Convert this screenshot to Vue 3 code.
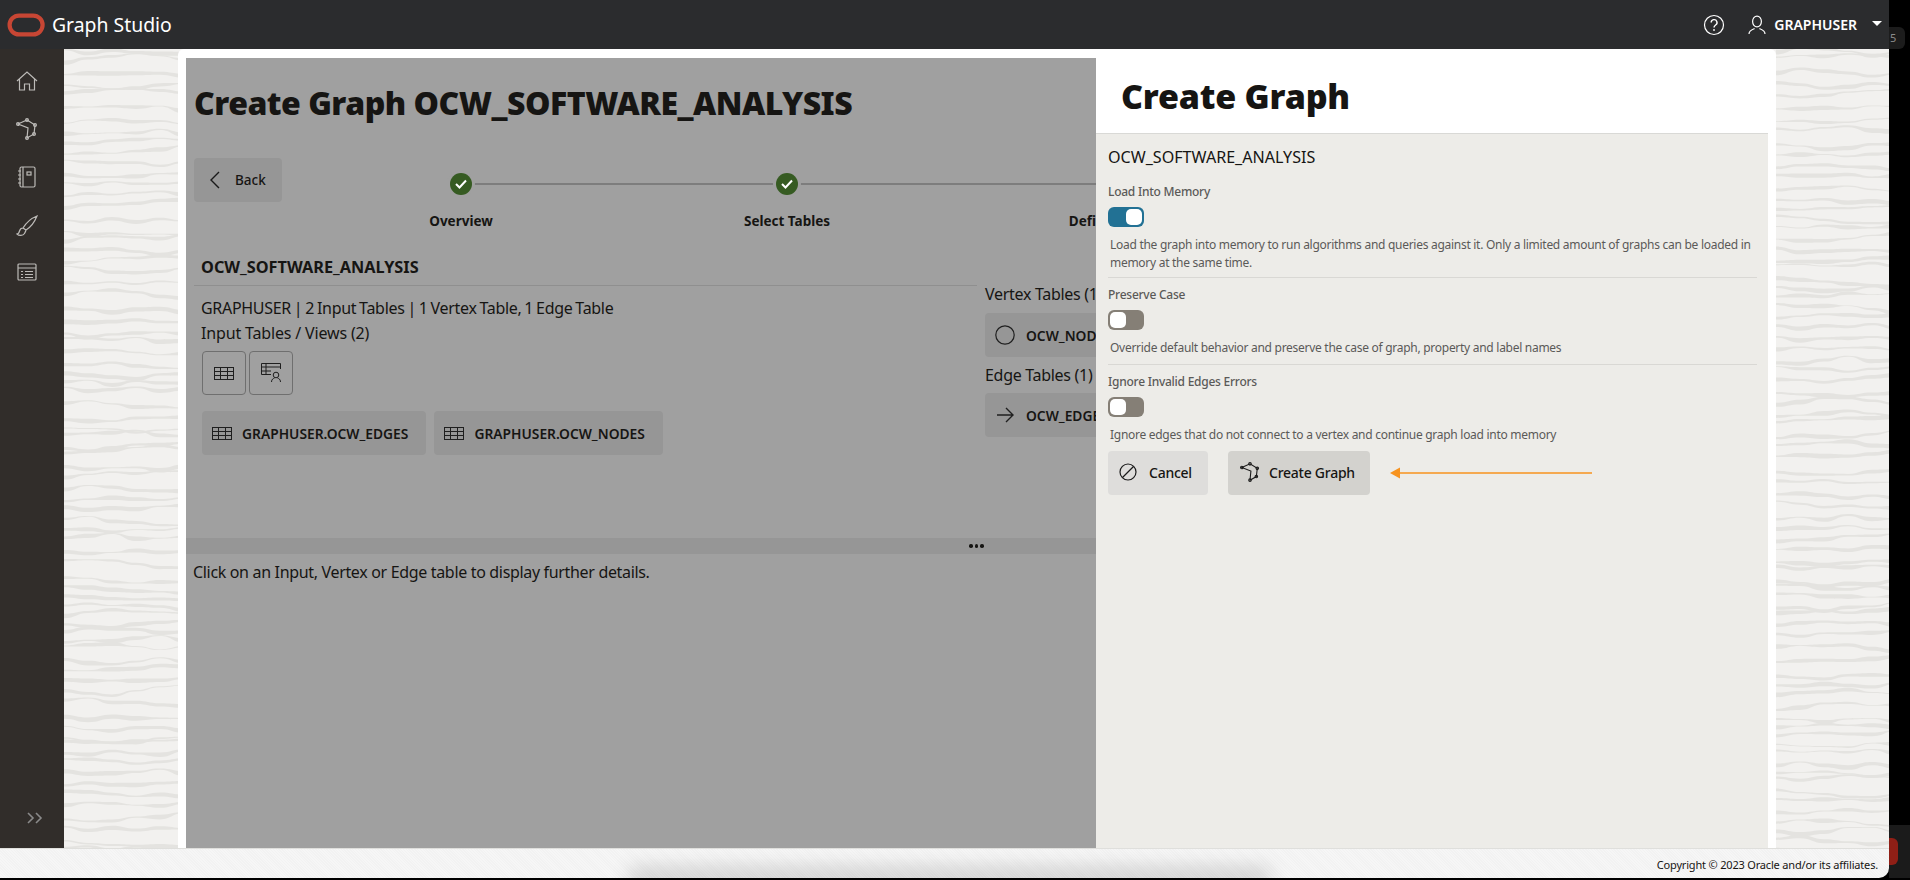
<script setup>
// wavy grain for the backdrop, seeded so every render is the same
let seed = 17
const rnd = () => {
  seed = (seed * 16807) % 2147483647
  return seed / 2147483647
}

function grainBands(x0, x1) {
  const bands = []
  let y = 3
  while (y < 802) {
    const top = []
    const bottom = []
    let drift = 0
    for (let x = x0; x <= x1 + 24; x += 24) {
      drift += (rnd() - 0.5) * 8
      drift *= 0.85
      const thick = 0.7 + rnd() * 4
      top.push([x, y + drift])
      bottom.push([x, y + drift + thick])
    }
    bottom.reverse()
    let d = `M${top[0][0]} ${top[0][1].toFixed(1)}`
    for (let i = 1; i < top.length; i++) {
      const mx = (top[i][0] + top[i - 1][0]) / 2
      d += ` C${mx} ${top[i - 1][1].toFixed(1)} ${mx} ${top[i][1].toFixed(1)} ${top[i][0]} ${top[i][1].toFixed(1)}`
    }
    d += ` L${bottom[0][0]} ${bottom[0][1].toFixed(1)}`
    for (let i = 1; i < bottom.length; i++) {
      const mx = (bottom[i][0] + bottom[i - 1][0]) / 2
      d += ` C${mx} ${bottom[i - 1][1].toFixed(1)} ${mx} ${bottom[i][1].toFixed(1)} ${bottom[i][0]} ${bottom[i][1].toFixed(1)}`
    }
    bands.push(d + 'Z')
    y += 7 + rnd() * 7
  }
  return bands
}

const grain = [...grainBands(0, 114), ...grainBands(1712, 1825)]

const toggles = [
  { label: 'Load Into Memory', on: true, help: ['Load the graph into memory to run algorithms and queries against it. Only a limited amount of graphs can be loaded in', 'memory at the same time.'] },
  { label: 'Preserve Case', on: false, help: ['Override default behavior and preserve the case of graph, property and label names'] },
  { label: 'Ignore Invalid Edges Errors', on: false, help: ['Ignore edges that do not connect to a vertex and continue graph load into memory'] }
]
</script>

<template>
  <div class="screen">
    <div class="app">
      <header class="topbar">
        <svg class="logo" width="38" height="24" viewBox="0 0 38 24"><rect x="2.600" y="2.600" width="33" height="18.800" rx="9.400" fill="none" stroke="#c74634" stroke-width="4.200" /></svg>
        <span class="brand">Graph Studio</span>
        <div class="top-right">
          <svg width="22" height="22" viewBox="0 0 22 22" fill="none" stroke="#fff"><circle cx="11" cy="11" r="9.5" stroke-width="1.2" /><path d="M8.2 8.6a2.9 2.9 0 1 1 4.4 2.4c-1 .7-1.6 1.2-1.6 2.4" stroke-width="1.4" /><circle cx="11" cy="16" r=".9" fill="#fff" stroke="none" /></svg>
          <svg class="user-icon" width="18" height="20" viewBox="0 0 18 20" fill="none" stroke="#fff" stroke-width="1.2"><ellipse cx="9" cy="6.5" rx="4.4" ry="5.4" /><path d="M1 19c0-3.5 3-4.4 5.600-5.400M17 19c0-3.500-3-4.400-5.600-5.400" /></svg>
          <span class="username">GRAPHUSER</span>
          <span class="caret"></span>
        </div>
      </header>

      <div class="middle">
        <nav class="sidebar">
          <svg width="22" height="20" viewBox="0 0 22 20" fill="none" stroke="#bdbbb8" stroke-width="1.2"><path d="M1 10 11 1l10 9M3.500 8v11h5v-6h5v6h5V8" /></svg>
          <svg width="22" height="22" viewBox="0 0 22 22" fill="none" stroke="#bdbbb8" stroke-width="1.2"><path d="M2 6 11 2l8 5-1 9-7 4 1-10z" /><circle cx="2" cy="6" r="1.4" /><circle cx="11" cy="2" r="1.4" /><circle cx="19" cy="7" r="1.4" /><circle cx="18" cy="16" r="1.4" /><circle cx="11" cy="20" r="1.4" /></svg>
          <svg width="20" height="22" viewBox="0 0 20 22" fill="none" stroke="#bdbbb8" stroke-width="1.2"><rect x="3" y="1" width="15" height="20" rx="1.5" /><path d="M6 1v20M1 5h3M1 9h3M1 13h3M1 17h3" /><rect x="10" y="6" width="4" height="3" /></svg>
          <svg width="22" height="22" viewBox="0 0 22 22" fill="none" stroke="#bdbbb8" stroke-width="1.2"><path d="M21 1C16 3 10 8 7 13l3 2c5-3 9-9 11-14zM7 13c-2 0-3 1-3.500 3S2 19 1 19c2 2 6 2 7.500-.5.700-1.200 1.200-2.300 1.500-3.500" /></svg>
          <svg width="20" height="18" viewBox="0 0 20 18" fill="none" stroke="#bdbbb8" stroke-width="1.2"><rect x="1" y="1" width="18" height="16" rx="1" /><path d="M1 5h18M4 8.500h2M8 8.500h8M4 11.500h2M8 11.500h8M4 14.500h2M8 14.500h8" /></svg>
          <svg class="expand" width="16" height="12" viewBox="0 0 16 12" fill="none" stroke="#8a8a8a" stroke-width="1.600"><path d="m1 1 5 5-5 5M9 1l5 5-5 5" /></svg>
        </nav>

        <main class="stage">
          <svg class="grain" width="1825" height="800" viewBox="0 0 1825 800" fill="#e4e3e0">
            <path v-for="(d, i) in grain" :key="i" :d="d" />
          </svg>
          <section class="card">
            <div class="wizard">
              <h1 class="page-title">Create Graph OCW_SOFTWARE_ANALYSIS</h1>
              <div class="wizard-nav">
                <button class="btn back">
                  <svg width="12" height="18" viewBox="0 0 12 18" fill="none" stroke="#1a1a1a" stroke-width="1.400"><path d="M10 1 2 9l8 8" /></svg>
                  <span>Back</span>
                </button>
                <div class="steps">
                  <div v-for="s in ['Overview', 'Select Tables', 'Define Graph']" :key="s" class="step">
                    <span class="dot">
                      <svg width="12" height="10" viewBox="0 0 12 10" fill="none" stroke="#fff" stroke-width="2"><path d="m1 5 3.500 3.500L11 1.500" /></svg>
                    </span>
                    <span class="step-label">{{ s }}</span>
                  </div>
                </div>
              </div>

              <div class="summary">
                <div class="summary-left">
                  <h2 class="graph-name">OCW_SOFTWARE_ANALYSIS</h2>
                  <p class="line first">GRAPHUSER | 2 Input Tables | 1 Vertex Table, 1 Edge Table</p>
                  <p class="line second">Input Tables / Views (2)</p>
                  <div class="icon-btns">
                    <span class="icon-btn">
                      <svg width="20" height="13" viewBox="0 0 20 13" fill="none" stroke="#1f1f1f"><rect x=".5" y=".5" width="19" height="12" /><path d="M.5 4.500h19M.5 8.500h19M6.500.5v12M13.500.5v12" /></svg>
                    </span>
                    <span class="icon-btn">
                      <svg width="22" height="20" viewBox="0 0 22 20" fill="none" stroke="#1f1f1f"><path d="M11 11.500H1.500v-11h19V6M1.500 4h19M1.500 8H11M6 .5v11" /><circle cx="16" cy="12" r="2.800" /><path d="M11.500 19c0-3 2-3.500 3-4M20.500 19c0-3-2-3.500-3-4" /></svg>
                    </span>
                  </div>
                  <div class="chips">
                    <span v-for="t in ['GRAPHUSER.OCW_EDGES', 'GRAPHUSER.OCW_NODES']" :key="t" class="chip">
                      <svg width="20" height="13" viewBox="0 0 20 13" fill="none" stroke="#1f1f1f"><rect x=".5" y=".5" width="19" height="12" /><path d="M.5 4.500h19M.5 8.500h19M6.500.5v12M13.500.5v12" /></svg>
                      {{ t }}
                    </span>
                  </div>
                </div>
                <div class="summary-right">
                  <p class="line">Vertex Tables (1)</p>
                  <span class="chip wide">
                    <svg width="20" height="20" viewBox="0 0 20 20" fill="none" stroke="#1f1f1f" stroke-width="1.200"><circle cx="10" cy="10" r="9.200" /></svg>
                    OCW_NODES
                  </span>
                  <p class="line edge">Edge Tables (1)</p>
                  <span class="chip wide">
                    <svg width="20" height="16" viewBox="0 0 20 16" fill="none" stroke="#1f1f1f" stroke-width="1.400"><path d="M2 8h16M11 1l7 7-7 7" /></svg>
                    OCW_EDGES
                  </span>
                </div>
              </div>

              <div class="splitter"><span></span><span></span><span></span></div>
              <p class="hint">Click on an Input, Vertex or Edge table to display further details.</p>
            </div>

            <aside class="drawer">
              <div class="drawer-head">Create Graph</div>
              <div class="drawer-body">
                <p class="drawer-name">OCW_SOFTWARE_ANALYSIS</p>
                <div v-for="t in toggles" :key="t.label" class="option">
                  <div class="option-label">{{ t.label }}</div>
                  <div class="toggle" :class="{ on: t.on }"><i></i></div>
                  <p class="help"><template v-for="h in t.help" :key="h">{{ h }}<br /></template></p>
                </div>
                <div class="actions">
                  <button class="btn action cancel">
                    <svg width="18" height="18" viewBox="0 0 18 18" fill="none" stroke="#1a1a1a" stroke-width="1.200"><circle cx="9" cy="9" r="8" /><path d="M3.500 14.500l11-11" /></svg>
                    Cancel
                  </button>
                  <button class="btn action create">
                    <svg width="20" height="20" viewBox="0 0 22 22" fill="none" stroke="#1a1a1a" stroke-width="1.200"><path d="M2 6 11 2l8 5-1 9-7 4 1-10z" /><circle cx="2" cy="6" r="1.400" /><circle cx="11" cy="2" r="1.400" /><circle cx="19" cy="7" r="1.400" /><circle cx="18" cy="16" r="1.400" /><circle cx="11" cy="20" r="1.400" /></svg>
                    Create Graph
                  </button>
                  <svg class="arrow" width="202" height="12" viewBox="0 0 202 12"><path d="M10 6h192" stroke="#f7931e" stroke-width="1.600" /><path d="M0 6l10-5.500v11z" fill="#f7931e" /></svg>
                </div>
              </div>
            </aside>
          </section>
        </main>
      </div>

      <footer class="footer">
        <span class="footer-shade"></span>
        Copyright © 2023 Oracle and/or its affiliates.
      </footer>
    </div>

    <div class="edge-strip">
      <span class="tab-num">5</span>
      <span class="red-tab"></span>
    </div>
  </div>
</template>

<style>
html, body { margin: 0; background: #000; }
</style>

<style scoped>
.screen {
  display: flex;
  width: 1910px;
  height: 880px;
  overflow: hidden;
  background: #000;
  font-family: "Noto Sans", "Open Sans", sans-serif;
  color: #161513;
}
.app {
  width: 1889px;
  flex: none;
  height: 878px;
  display: flex;
  flex-direction: column;
  border-bottom-right-radius: 10px;
  overflow: hidden;
}

.topbar {
  height: 49px;
  flex: none;
  display: flex;
  align-items: center;
  padding: 0 7px 0 7px;
  background: #2b2c2e;
  color: #fff;
}
.logo { margin-right: 7px; }
.brand { font-size: 19.400px; }
.top-right { margin-left: auto; display: flex; align-items: center; }
.user-icon { margin-left: 22.500px; }
.username { margin-left: 8.500px; font-size: 14px; font-weight: 600; }
.caret {
  margin-left: 15px;
  margin-bottom: 2px;
  border-left: 5px solid transparent;
  border-right: 5px solid transparent;
  border-top: 5px solid #fff;
}

.middle { flex: 1; display: flex; min-height: 0; }
.sidebar {
  width: 64px;
  flex: none;
  background: #312d2a;
  display: flex;
  flex-direction: column;
  align-items: center;
  padding-top: 22px;
  gap: 26.500px;
  box-sizing: border-box;
  padding-right: 10px;
}
.expand { margin-top: auto; margin-bottom: 24px; margin-left: 16px; }

.stage {
  position: relative;
  flex: 1;
  background: #f2f1ef;
  display: flex;
}
.grain { position: absolute; left: 0; top: 0; }
.card {
  position: relative;
  margin-left: 114px;
  width: 1598px;
  flex: none;
  box-sizing: border-box;
  padding: 9px 8px 0;
  background: #fff;
  border-radius: 6px 6px 0 0;
  display: flex;
}

.wizard {
  width: 910px;
  flex: none;
  background: #a0a0a0;
  padding: 0 8px;
  box-sizing: border-box;
  overflow: hidden;
}
.page-title {
  margin: 17px 0 0;
  font-size: 32px;
  line-height: 56px;
  font-weight: 900;
  letter-spacing: -.5px;
  white-space: nowrap;
}
.wizard-nav { display: flex; margin-top: 27px; height: 89px; }
.btn {
  border: 0;
  border-radius: 4px;
  font: inherit;
  display: inline-flex;
  align-items: center;
  height: 44px;
  color: #161513;
}
.back {
  flex: none;
  width: 88px;
  background: #969696;
  padding: 0 0 0 15px;
  box-sizing: border-box;
  font-size: 13.500px;
  font-weight: 500;
  gap: 14px;
}
.steps {
  position: relative;
  display: grid;
  grid-template-columns: repeat(3, 326px);
  margin-left: 16px;
  flex: none;
}
.steps::before {
  content: "";
  position: absolute;
  left: 163px;
  right: 0;
  top: 25px;
  height: 2px;
  background: #7d7d7d;
}
.step {
  position: relative;
  display: flex;
  flex-direction: column;
  align-items: center;
  padding-top: 15px;
}
.dot {
  width: 22px;
  height: 22px;
  border-radius: 50%;
  background: #365b22;
  display: flex;
  align-items: center;
  justify-content: center;
  box-shadow: 0 0 0 3px #a0a0a0;
}
.step-label { margin-top: 17px; font-size: 13.500px; font-weight: 700; white-space: nowrap; }

.summary { display: flex; height: 291px; }
.summary-left { width: 783px; flex: none; }
.graph-name {
  margin: 0;
  padding: 10px 7px 7px;
  font-size: 16.300px;
  line-height: 21px;
  font-weight: 700;
  border-bottom: 1px solid #8f8f8f;
}
.line { margin: 0; font-size: 16px; line-height: 25px; letter-spacing: -.3px; white-space: nowrap; }
.summary-left .line { padding-left: 7px; }
.line.first { margin-top: 10px; word-spacing: -1px; }
.line.second { letter-spacing: -.16px; }
.icon-btns { display: flex; gap: 3px; padding: 5px 0 0 8px; }
.icon-btn {
  width: 42px;
  height: 42px;
  border: 1px solid #6f6f6f;
  border-radius: 4px;
  display: flex;
  align-items: center;
  justify-content: center;
}
.chips { display: flex; gap: 8px; padding: 16px 0 0 8px; }
.chip {
  height: 44px;
  padding: 0 18px 0 10px;
  background: #969696;
  border-radius: 4px;
  display: inline-flex;
  align-items: center;
  gap: 10px;
  font-size: 13.800px;
  font-weight: 600;
  white-space: nowrap;
}
.summary-right { margin-left: 8px; padding-top: 35px; }
.chip.wide { display: flex; width: 180px; margin-top: 6px; gap: 11px; }
.line.edge { margin-top: 6px; margin-bottom: -1px; }

.splitter {
  margin: 0 -8px;
  padding-left: 783px;
  height: 16px;
  background: #969696;
  display: flex;
  align-items: center;
  gap: 2px;
}
.splitter span { width: 3.500px; height: 3.500px; border-radius: 50%; background: #161513; }
.hint { margin: 6px 0 0 -1px; font-size: 16px; line-height: 24px; letter-spacing: -.33px; white-space: nowrap; }

.drawer {
  width: 672px;
  flex: none;
  display: flex;
  flex-direction: column;
  margin-top: -9px;
}
.drawer-head {
  height: 85px;
  flex: none;
  box-sizing: border-box;
  padding: 20px 0 0 25px;
  font-size: 34px;
  line-height: 54px;
  font-weight: 900;
  letter-spacing: -.2px;
  background: #fff;
  border-bottom: 1px solid #d9d9d6;
}
.drawer-body {
  flex: 1;
  min-width: 0;
  background: #edece8;
  padding: 11px 11px 0 12px;
}
.drawer-name { margin: 0; font-size: 16.100px; line-height: 24px; }
.option { border-bottom: 1px solid #d9d8d4; padding-top: 8px; }
.option:nth-of-type(1) { padding-top: 14px; }
.option:nth-of-type(3) { border-bottom: 0; }
.option-label { font-size: 12px; line-height: 17px; font-weight: 500; letter-spacing: -.25px; color: #5b5a58; }
.toggle {
  width: 36px;
  height: 20px;
  margin-top: 7px;
  box-sizing: border-box;
  padding: 2px;
  border-radius: 6px;
  background: #857f76;
  display: flex;
}
.toggle.on { background: #227194; justify-content: flex-end; }
.toggle i { width: 16px; height: 16px; border-radius: 5px; background: #fff; }
.help {
  margin: 9px 0 7px 2px;
  font-size: 12px;
  line-height: 18px;
  letter-spacing: -.28px;
  color: #5b5a58;
  white-space: nowrap;
}
.option:nth-of-type(1) .help { margin-bottom: 5px; }
.actions { display: flex; align-items: center; }
.action { font-size: 14px; font-weight: 500; letter-spacing: -.25px; padding: 0 0 2px 11px; box-sizing: border-box; }
.cancel { width: 100px; background: #dedddb; gap: 12px; }
.create { width: 142px; margin-left: 20px; background: #d3d2ce; gap: 9px; padding-left: 12px; }
.arrow { margin-left: 20px; }

.footer {
  position: relative;
  overflow: hidden;
  height: 30px;
  flex: none;
  box-sizing: border-box;
  padding: 2px 11px 0 0;
  display: flex;
  align-items: center;
  justify-content: flex-end;
  font-size: 11px;
  letter-spacing: -.18px;
  color: #161513;
  border-top: 1px solid #dfdfdc;
  background: repeating-linear-gradient(45deg, #f6f6f6 0 1px, #f2f2f2 1px 2px);
}
.footer-shade {
  position: absolute;
  left: 640px;
  width: 620px;
  bottom: 0;
  height: 0;
  box-shadow: 0 0 20px 10px rgba(0, 0, 0, .16);
}

.edge-strip { position: relative; flex: 1; background: #000; }
.tab-num {
  position: absolute;
  left: 0;
  top: 27px;
  width: 15px;
  height: 22px;
  padding-left: 1px;
  background: #1c1c1c;
  border-radius: 0 6px 6px 0;
  color: #8b8b8b;
  font-size: 11px;
  line-height: 22px;
}
.edge-strip::after {
  content: "";
  position: absolute;
  left: 0;
  right: 0;
  top: 825px;
  height: 53px;
  background: #1b1b1b;
}
.red-tab {
  position: absolute;
  z-index: 1;
  left: 0;
  top: 838px;
  width: 9px;
  height: 27px;
  background: #8f1f16;
  border-radius: 0 6px 6px 0;
}
</style>
